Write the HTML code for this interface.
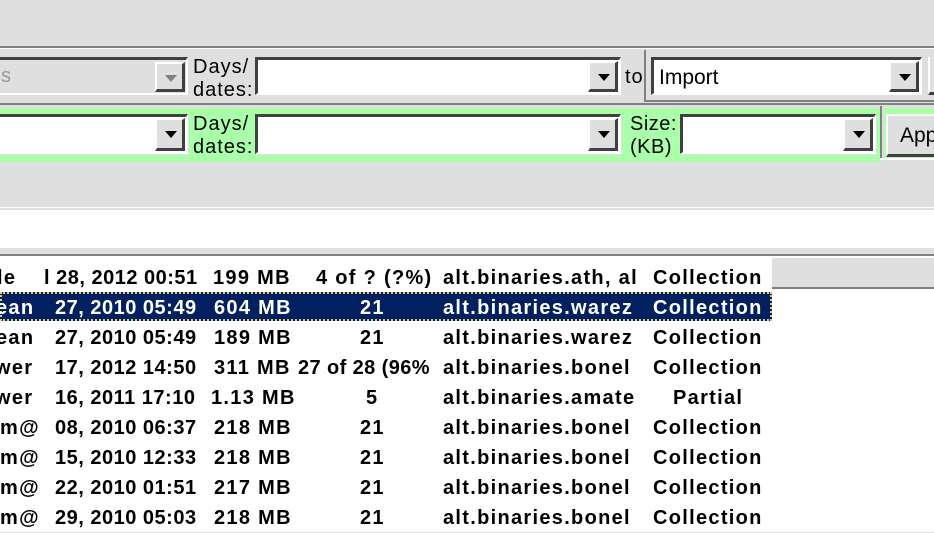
<!DOCTYPE html>
<html><head><meta charset="utf-8"><style>
*{margin:0;padding:0;box-sizing:border-box}
body{width:934px;height:532px;overflow:hidden;background:#dfdfdf;position:relative;font-family:"Liberation Sans",Arial,sans-serif}
.a{position:absolute}
.cb{position:absolute;background:#fff;border-top:3px solid #404040;border-left:3px solid #404040;border-bottom:2px solid #fff;border-right:2px solid #fff;box-shadow:1px 1px 0 #dfdfdf}
.cb.dis{background:#dfdfdf}
.btn{position:absolute;top:1px;right:1px;width:30px;bottom:1px;background:#dfdfdf;border-top:2px solid #fff;border-left:2px solid #fff;border-right:3px solid #404040;border-bottom:3px solid #404040}
.btn:after{content:"";position:absolute;left:8px;top:11px;border-left:6px solid transparent;border-right:6px solid transparent;border-top:7px solid #000}
.dis .btn:after{border-top-color:#808080}
.lbl{position:absolute;font-size:20px;line-height:23px;color:#000;letter-spacing:1px}
.t{position:absolute;font-weight:bold;font-size:20px;line-height:30px;top:2px;white-space:nowrap;color:#000;letter-spacing:1.3px}
.t.d{letter-spacing:0.5px}
.sel .t{color:#fff;top:1px}
</style></head><body>
<div class="a" style="left:0;top:46px;width:934px;height:2px;background:#808080"></div>
<div class="a" style="left:0;top:48px;width:934px;height:1px;background:#fff"></div>
<div class="cb dis" style="left:-10px;top:57px;width:198px;height:38px"><span class="lbl" style="left:8px;top:5px;color:#999">s</span><div class="btn" style="top:2px"></div></div>
<div class="lbl" style="left:193px;top:56px">Days/<br>dates:</div>
<div class="cb" style="left:255px;top:57px;width:366px;height:38px"><div class="btn"></div></div>
<div class="lbl" style="left:625px;top:66px">to</div>
<div class="a" style="left:644px;top:50px;width:2px;height:52px;background:#808080"></div>
<div class="a" style="left:644px;top:100px;width:290px;height:2px;background:#808080"></div>
<div class="cb" style="left:651px;top:57px;width:271px;height:38px"><span class="lbl" style="left:5px;top:6px;font-size:21px;letter-spacing:0">Import</span><div class="btn"></div></div>
<div class="a" style="left:928px;top:57px;width:6px;height:38px;border-left:2px solid #fff;border-bottom:3px solid #404040"></div>
<div class="a" style="left:0;top:103px;width:934px;height:2px;background:#808080"></div>
<div class="a" style="left:0;top:108px;width:882px;height:54px;background:#aaffaa"></div>
<div class="a" style="left:880px;top:106px;width:2px;height:54px;background:#808080"></div>
<div class="a" style="left:880px;top:158px;width:54px;height:2px;background:#fff"></div>
<div class="a" style="left:884px;top:108px;width:50px;height:50px;background:#aaffaa"></div>
<div class="cb" style="left:-10px;top:114px;width:198px;height:40px"><div class="btn"></div></div>
<div class="lbl" style="left:193px;top:113px">Days/<br>dates:</div>
<div class="cb" style="left:255px;top:114px;width:366px;height:40px"><div class="btn"></div></div>
<div class="lbl" style="left:630px;top:113px;letter-spacing:0.5px">Size:<br>(KB)</div>
<div class="cb" style="left:680px;top:114px;width:196px;height:40px"><div class="btn"></div></div>
<div class="a" style="left:886px;top:114px;width:60px;height:43px;background:#dfdfdf;border-top:2px solid #fff;border-left:2px solid #fff;border-bottom:3px solid #404040"><span class="lbl" style="left:12px;top:8px;font-size:21px;letter-spacing:0">App</span></div>
<div class="a" style="left:0;top:207px;width:934px;height:1px;background:#fff"></div>
<div class="a" style="left:0;top:210px;width:934px;height:38px;background:#fff"></div>
<div class="a" style="left:0;top:254px;width:934px;height:2px;background:#808080"></div>
<div class="a" style="left:0;top:256px;width:934px;height:276px;background:#fff"></div>
<div class="a" style="left:772px;top:258px;width:162px;height:31px;background:#dfdfdf;border-bottom:2px solid #808080"></div>
<div class="a" style="left:0;top:261px;width:772px;height:271px">
<div class="a" style="left:0;top:0;width:772px;height:30px"><span class="t" style="left:-3px">le</span><span class="t d" style="left:44px">l 28, 2012 00:51</span><span class="t" style="left:213px">199 MB</span><span class="t" style="left:316px">4 of ? (?%)</span><span class="t" style="left:443px">alt.binaries.ath, al</span><span class="t" style="left:653px">Collection</span></div>
<div class="a sel" style="left:0;top:31px;width:772px;height:29px;background:#00205f;outline:2px dotted #e8c870;outline-offset:-2px"><span class="t" style="left:-4px">ean</span><span class="t d" style="left:55px">27, 2010 05:49</span><span class="t" style="left:214px">604 MB</span><span class="t" style="left:360px">21</span><span class="t" style="left:443px">alt.binaries.warez</span><span class="t" style="left:653px">Collection</span></div>
<div class="a" style="left:0;top:60px;width:772px;height:30px"><span class="t" style="left:-4px">ean</span><span class="t d" style="left:55px">27, 2010 05:49</span><span class="t" style="left:214px">189 MB</span><span class="t" style="left:360px">21</span><span class="t" style="left:443px">alt.binaries.warez</span><span class="t" style="left:653px">Collection</span></div>
<div class="a" style="left:0;top:90px;width:772px;height:30px"><span class="t" style="left:-5px">wer</span><span class="t d" style="left:55px">17, 2012 14:50</span><span class="t" style="left:214px">311 MB</span><span class="t" style="left:298px;letter-spacing:0.4px">27 of 28 (96%</span><span class="t" style="left:443px">alt.binaries.bonel</span><span class="t" style="left:653px">Collection</span></div>
<div class="a" style="left:0;top:120px;width:772px;height:30px"><span class="t" style="left:-5px">wer</span><span class="t d" style="left:55px">16, 2011 17:10</span><span class="t" style="left:211px">1.13 MB</span><span class="t" style="left:366px">5</span><span class="t" style="left:443px">alt.binaries.amate</span><span class="t" style="left:673px">Partial</span></div>
<div class="a" style="left:0;top:150px;width:772px;height:30px"><span class="t" style="left:0">m@</span><span class="t d" style="left:55px">08, 2010 06:37</span><span class="t" style="left:214px">218 MB</span><span class="t" style="left:360px">21</span><span class="t" style="left:443px">alt.binaries.bonel</span><span class="t" style="left:653px">Collection</span></div>
<div class="a" style="left:0;top:180px;width:772px;height:30px"><span class="t" style="left:0">m@</span><span class="t d" style="left:55px">15, 2010 12:33</span><span class="t" style="left:214px">218 MB</span><span class="t" style="left:360px">21</span><span class="t" style="left:443px">alt.binaries.bonel</span><span class="t" style="left:653px">Collection</span></div>
<div class="a" style="left:0;top:210px;width:772px;height:30px"><span class="t" style="left:0">m@</span><span class="t d" style="left:55px">22, 2010 01:51</span><span class="t" style="left:214px">217 MB</span><span class="t" style="left:360px">21</span><span class="t" style="left:443px">alt.binaries.bonel</span><span class="t" style="left:653px">Collection</span></div>
<div class="a" style="left:0;top:240px;width:772px;height:30px"><span class="t" style="left:0">m@</span><span class="t d" style="left:55px">29, 2010 05:03</span><span class="t" style="left:214px">218 MB</span><span class="t" style="left:360px">21</span><span class="t" style="left:443px">alt.binaries.bonel</span><span class="t" style="left:653px">Collection</span></div>
</div>
</body></html>
